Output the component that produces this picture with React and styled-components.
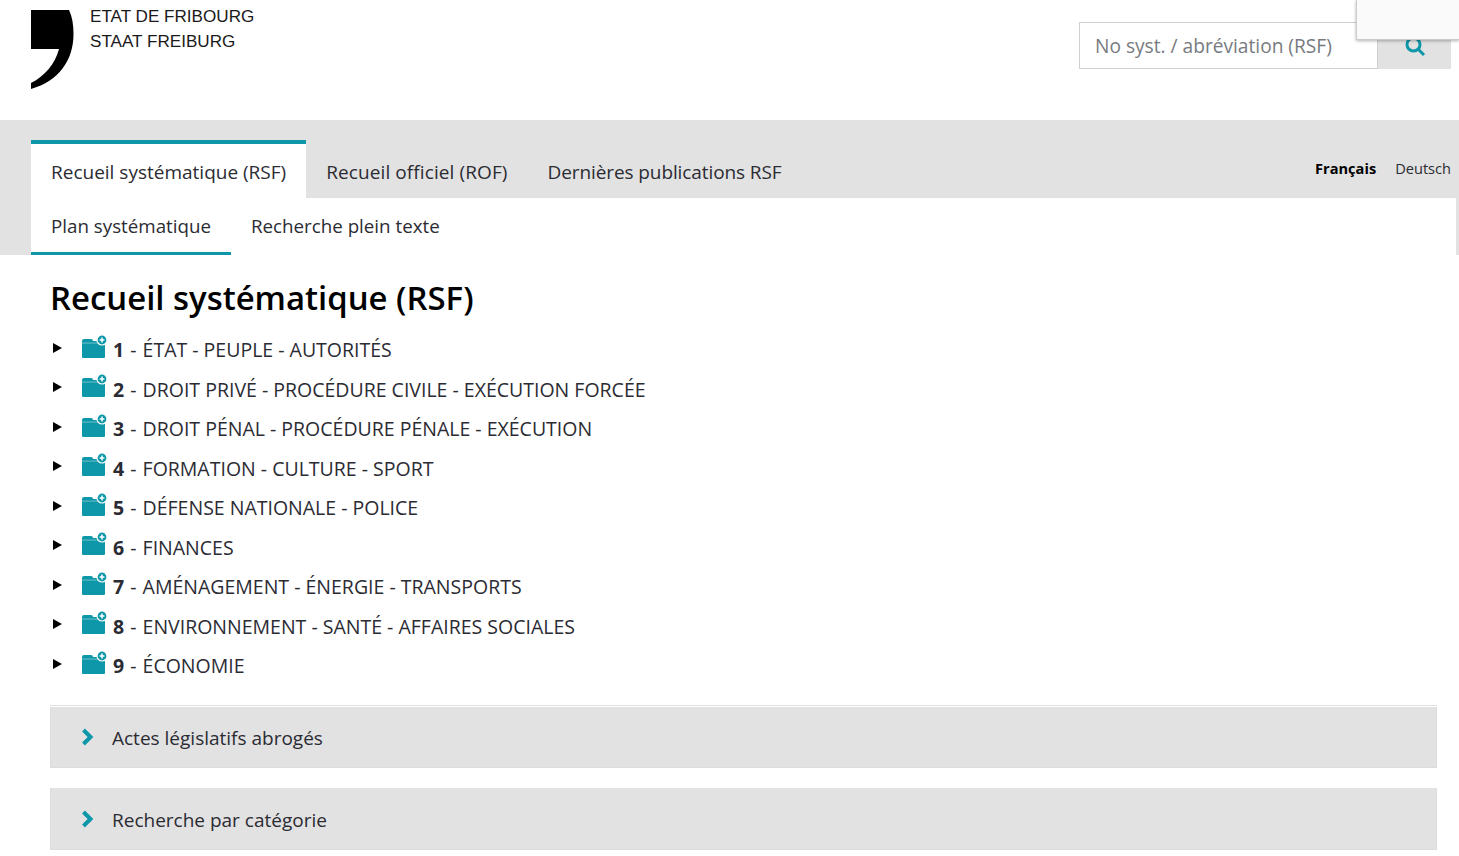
import React from "react";
import styled, { createGlobalStyle } from "styled-components";

const Global = createGlobalStyle`
  html, body { margin: 0; padding: 0; background: #fff; }
  body { font-family: "Open Sans", "Liberation Sans", sans-serif; color: #2b2b33; overflow: hidden; }
`;
const Page = styled.div`position: relative; width: 1459px; height: 856px; overflow: hidden;`;
const Header = styled.header`height: 120px; display: flex; justify-content: space-between; padding: 0 8px 0 31px; box-sizing: border-box;`;
const Brand = styled.div`display: flex; gap: 16px; align-items: flex-start; padding-top: 5px;`;
const BrandText = styled.div`font-family: "Liberation Sans", Arial, sans-serif; font-size: 17.1px; line-height: 25px; color: #1a1a1a; margin-top: -1px;`;
const Logo = styled.svg`width: 43px; height: 80px; margin-top: 5px; display: block;`;
const Search = styled.form`display: flex; margin-top: 22px; height: 47px;`;
const SearchInput = styled.div`
  width: 282px; border: 1px solid #d0d0d0; background: #fff; color: #777b80;
  font-size: 19.15px; line-height: 46px; padding-left: 15px; box-sizing: content-box;
`;
const SearchButton = styled.div`width: 73px; background: #e2e2e2; display: flex; align-items: center; justify-content: center; color: #0d97a8;`;
const Popup = styled.div`position: absolute; top: 0; left: 1356px; width: 103px; height: 40px; background: #fafafa; border: 1px solid #ccc; border-top: 0; border-right: 0; box-sizing: border-box; box-shadow: 0 1px 3px rgba(0,0,0,.3);`;
const Band = styled.div`background: #e2e2e2; height: 135px; padding: 20px 3px 0 31px; box-sizing: border-box;`;
const TabRow = styled.nav`display: flex; height: 58px; align-items: stretch;`;
const Tab = styled.a`
  box-sizing: border-box; padding: 0 20px; font-size: 19px; line-height: 56px; color: #2b2b33; white-space: nowrap;
  letter-spacing: ${p => p.$track || 0}px;
  ${p => p.$active ? "background: #fff; border-top: 4px solid #0d97a8;" : "padding-top: 4px;"}
`;
const Lang = styled.div`margin-left: auto; display: flex; gap: 19px; font-size: 14.6px; padding-top: 18px; color: #2b2b33; margin-right: 5px;`;
const LangActive = styled.span`font-weight: 700; color: #000;`;
const SubRow = styled.nav`display: flex; height: 57px; background: #fff;`;
const SubTab = styled.a`
  box-sizing: border-box; padding: 0 20px; font-size: 18.75px; line-height: 56px; color: #2b2b33; white-space: nowrap;
  ${p => p.$active ? "border-bottom: 3px solid #0d97a8;" : ""}
`;
const Main = styled.main`padding: 0 22px 0 50px;`;
const Title = styled.h1`margin: 19px 0 8px; font-size: 32.9px; line-height: 48px; font-weight: 600; color: #000;`;
const Tree = styled.ul`list-style: none; margin: 0; padding: 0 0 19px; border-bottom: 1px solid #dedede;`;
const Row = styled.li`display: flex; align-items: center; height: 39.5px; font-size: 19.5px; white-space: pre;`;
const Arrow = styled.span`width: 0; height: 0; border-left: 9px solid #000; border-top: 5px solid transparent; border-bottom: 5px solid transparent; margin: -4px 20px 0 3px;`;
const Folder = styled.svg`width: 26px; height: 24px; margin: -6px 5px 0 0; flex: none;`;
const Num = styled.b`font-weight: 700; margin-right: 1px;`;
const Label = styled.span`margin-left: 1px;`;
const Accordion = styled.div`
  display: flex; align-items: center; height: ${p => p.$first ? 61 : 62}px; background: #e2e2e2; border: 1px solid #dcdcdc; border-top: 0; box-sizing: border-box;
  margin-top: ${p => p.$first ? 1 : 20}px; padding: ${p => p.$first ? 0 : 2}px 0 0 30px; font-size: 19px; gap: 18px; color: #2b2b33;
`;
const AccordionLabel = styled.span`margin-top: 2px;`;

const items = [
  ["1", "ÉTAT - PEUPLE - AUTORITÉS"],
  ["2", "DROIT PRIVÉ - PROCÉDURE CIVILE - EXÉCUTION FORCÉE"],
  ["3", "DROIT PÉNAL - PROCÉDURE PÉNALE - EXÉCUTION"],
  ["4", "FORMATION - CULTURE - SPORT"],
  ["5", "DÉFENSE NATIONALE - POLICE"],
  ["6", "FINANCES"],
  ["7", "AMÉNAGEMENT - ÉNERGIE - TRANSPORTS"],
  ["8", "ENVIRONNEMENT - SANTÉ - AFFAIRES SOCIALES"],
  ["9", "ÉCONOMIE"],
];

const FolderIcon = () => (
  <Folder viewBox="0 0 26 24">
    <path d="M0 6 a2 2 0 0 1 2-2 h7 a2 2 0 0 1 2 2 h9 a3 3 0 0 1 3 3 V22 a1 1 0 0 1-1 1 H1 a1 1 0 0 1-1-1 Z" fill="#0d97a8" />
    <rect x="0" y="7.6" width="23" height="0.9" fill="#fff" opacity="0.45" />
    <circle cx="20" cy="5" r="5" fill="#0d97a8" stroke="#fff" strokeWidth="1.2" />
    <path d="M17.6 5 h4.8 M20 2.6 v4.8" stroke="#fff" strokeWidth="1.5" />
  </Folder>
);
const Chevron = () => (
  <svg width="13" height="18" viewBox="0 0 13 18">
    <path d="M2.500 2 L9.500 9 L2.500 16" fill="none" stroke="#0d97a8" strokeWidth="4" />
  </svg>
);

export default function App() {
  return (
    <Page>
      <Global />
      <Header>
        <Brand>
          <Logo viewBox="0 0 43 80">
            <path d="M0 0 H38 C41 6 42.500 14 42.500 24 C42.500 50 28 71 0 79 V73 C14 66 24 54 28 39 H0 Z" fill="#000" />
          </Logo>
          <BrandText>ETAT DE FRIBOURG<br />STAAT FREIBURG</BrandText>
        </Brand>
        <Search>
          <SearchInput>No syst. / abréviation (RSF)</SearchInput>
          <SearchButton>
            <svg width="22" height="22" viewBox="0 0 22 22" fill="none" stroke="#0d97a8" strokeWidth="3">
              <circle cx="9.500" cy="9.500" r="6.500" /><path d="M14 14 L20 20" />
            </svg>
          </SearchButton>
        </Search>
      </Header>
      <Popup />
      <Band>
        <TabRow>
          <Tab $active>Recueil systématique (RSF)</Tab>
          <Tab $track={0.1}>Recueil officiel (ROF)</Tab>
          <Tab $track={-0.1}>Dernières publications RSF</Tab>
          <Lang><LangActive>Français</LangActive><span>Deutsch</span></Lang>
        </TabRow>
        <SubRow>
          <SubTab $active>Plan systématique</SubTab>
          <SubTab>Recherche plein texte</SubTab>
        </SubRow>
      </Band>
      <Main>
        <Title>Recueil systématique (RSF)</Title>
        <Tree>
          {items.map(([n, t]) => (
            <Row key={n}><Arrow /><FolderIcon /><Num>{n}</Num> - <Label>{t}</Label></Row>
          ))}
        </Tree>
        <Accordion $first><Chevron /><AccordionLabel>Actes législatifs abrogés</AccordionLabel></Accordion>
        <Accordion><Chevron /><AccordionLabel>Recherche par catégorie</AccordionLabel></Accordion>
      </Main>
    </Page>
  );
}
